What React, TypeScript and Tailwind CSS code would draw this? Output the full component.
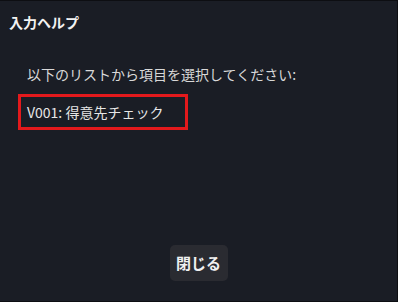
export default function App() {
  const font = { fontFamily: '"Noto Sans CJK JP", "Noto Sans", sans-serif' };
  return (
    <div
      className="w-[398px] h-[302px] bg-[#1a1d25] border-t border-r border-b border-[#0d0e12] flex flex-col text-white"
      style={font}
    >
      <div className="pl-[9px] pt-[11px] text-[14px] leading-[20px] font-bold text-[#f2f2f2]">入力ヘルプ</div>
      <div className="pl-[27px] pt-[32px] text-[14px] leading-[20px] text-[#d8d8d8]">以下のリストから項目を選択してください:</div>
      <div className="pl-[18px] pt-[10px]">
        <div className="w-[170px] h-[36px] border-[3px] border-[#e3191c] flex items-center pl-[6px] text-[14px] text-[#e6e6e6]">
          V001: 得意先チェック
        </div>
      </div>
      <div className="flex-1" />
      <div className="flex justify-center pb-[20px]">
        <div className="w-[58px] h-[36px] bg-[#2a2b31] rounded-[5px] flex items-center justify-center text-[15px] font-bold text-[#f0f0f0]">閉じる</div>
      </div>
    </div>
  );
}
